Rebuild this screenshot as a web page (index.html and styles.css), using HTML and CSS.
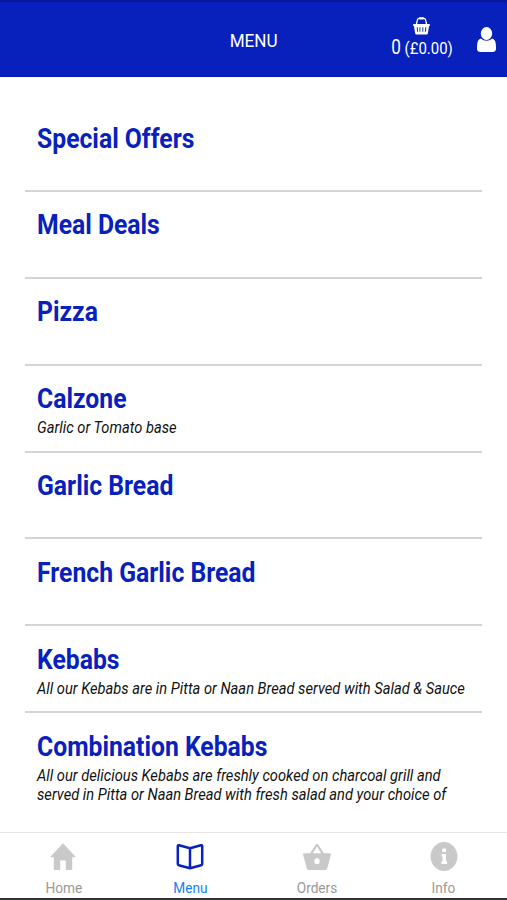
FILE: index.html
```html
<!DOCTYPE html>
<html lang="en">
<head>
    <meta charset="UTF-8">
    <title>Menu</title>
    <link rel="stylesheet" href="styles.css">
</head>
<body>
    <div class="app">
        <header class="header">
            <h1><span class="text">MENU</span></h1>
            <div class="basket">
                <svg class="basket-icon" viewBox="0 0 17 18" preserveAspectRatio="none">
                    <path d="M3.2 8 4.5 2.6Q4.8 1.3 6 1.3H11Q12.2 1.3 12.5 2.6L13.8 8" fill="none" stroke="#fff" stroke-width="1.3"/>
                    <rect x="6" y="0.3" width="5" height="2.2" rx="0.8" fill="#fff"/>
                    <path fill="#fff" fill-rule="evenodd" d="M1 7H16Q17 7 17 8T16 9.2L14.9 16.2Q14.7 17.6 13.5 17.6H3.5Q2.3 17.6 2.1 16.2L1 9.2Q0 9 0 8T1 7ZM3.7 10.2 4.2 14.8H5.1L4.7 10.2ZM6.5 10.2V14.8H7.4V10.2ZM9.4 10.2V14.8H10.3V10.2ZM12.3 10.2 11.9 14.8H12.8L13.3 10.2Z"/>
                </svg>
                <div class="total"><span class="text"><span class="count">0</span> (£0.00)</span></div>
            </div>
            <svg class="user-icon" viewBox="0 0 18 24" preserveAspectRatio="none">
                <path fill="#fff" d="M3.5 11Q0 12 0 18.8V20.6Q0 24 3.5 24H14.5Q18 24 18 20.6V18.8Q18 12 14.5 11Q12 13.2 9 13.2T3.5 11Z"/>
                <ellipse cx="9" cy="6.2" rx="5.4" ry="6.2" fill="#fff"/>
            </svg>
        </header>

        <main class="menu">
            <section class="item">
                <h2><span class="text">Special Offers</span></h2>
            </section>
            <section class="item">
                <h2><span class="text">Meal Deals</span></h2>
            </section>
            <section class="item">
                <h2><span class="text">Pizza</span></h2>
            </section>
            <section class="item">
                <h2><span class="text">Calzone</span></h2>
                <p><span class="text">Garlic or Tomato base</span></p>
            </section>
            <section class="item">
                <h2><span class="text">Garlic Bread</span></h2>
            </section>
            <section class="item">
                <h2><span class="text">French Garlic Bread</span></h2>
            </section>
            <section class="item">
                <h2><span class="text">Kebabs</span></h2>
                <p><span class="text">All our Kebabs are in Pitta or Naan Bread served with Salad &amp; Sauce</span></p>
            </section>
            <section class="item">
                <h2><span class="text">Combination Kebabs</span></h2>
                <p><span class="text">All our delicious Kebabs are freshly cooked on charcoal grill and<br>served in Pitta or Naan Bread with fresh salad and your choice of</span></p>
            </section>
        </main>

        <nav class="tabs">
            <a class="tab">
                <svg class="tab-icon" viewBox="0 0 28 32" preserveAspectRatio="none">
                    <path fill="#c9c9c9" d="M14 2.2 27 16.3H23.2V29H16.8V19.5H11.2V29H4.8V16.3H1Z"/>
                </svg>
                <span class="text">Home</span>
            </a>
            <a class="tab active">
                <svg class="tab-icon" viewBox="0 0 28 32" preserveAspectRatio="none">
                    <path fill="none" stroke="#0821bd" stroke-width="2.5" stroke-linejoin="round" d="M14 7.2 3.1 4.3Q1.8 4 1.8 5.2V23Q1.8 24 2.8 24.2L14 27.2 25.2 24.2Q26.2 24 26.2 23V5.2Q26.2 4 24.9 4.3L14 7.2V27"/>
                </svg>
                <span class="text">Menu</span>
            </a>
            <a class="tab">
                <svg class="tab-icon" viewBox="0 0 28 32" preserveAspectRatio="none">
                    <path fill="#c9c9c9" fill-rule="evenodd" d="M13 3.3Q14 2 15 3.3L21 12.2H26.8Q28.2 12.2 27.9 13.6L24.4 27Q23.9 29 22.2 29H5.8Q4.1 29 3.6 27L0.1 13.6Q-0.2 12.2 1.2 12.2H7ZM14 5.5 9.8 12.2H18.2ZM14 17.3A2.7 3 0 1 0 14 23.3A2.7 3 0 1 0 14 17.3Z"/>
                </svg>
                <span class="text">Orders</span>
            </a>
            <a class="tab">
                <svg class="tab-icon" viewBox="0 0 28 32" preserveAspectRatio="none">
                    <ellipse cx="14" cy="15.5" rx="13.4" ry="14.5" fill="#c9c9c9"/>
                    <rect x="12.3" y="7.4" width="3.8" height="3.6" rx="0.5" fill="#fff"/>
                    <path fill="#fff" d="M11.6 13H16V20.3H17V23H11.4V20.3H12.5V15.6H11.6Z"/>
                </svg>
                <span class="text">Info</span>
            </a>
        </nav>
    </div>
</body>
</html>
```
FILE: styles.css
```css
body {
    font-family: Roboto, sans-serif;
    background-color: #fff;
    margin: 0;
    padding: 0;
}
.app {
    display: flex;
    flex-direction: column;
    height: 900px;
    box-sizing: border-box;
    border-bottom: 2px solid #333;
    overflow: hidden;
}
/* condensed lettering */
.text {
    display: inline-block;
    white-space: nowrap;
    transform: scaleX(0.88);
}
.header {
    display: grid;
    grid-template-columns: 127px 253px 83px 44px;
    height: 77px;
    flex: none;
    box-sizing: border-box;
    border-top: 2px solid #06189a;
    background-color: #0821bd;
    color: #fff;
}
.header h1 {
    grid-column: 2;
    margin: 0;
    padding-top: 27px;
    font-size: 19px;
    font-weight: 400;
    line-height: 24px;
    text-align: center;
}
.header h1 .text {
    transform: scaleX(0.9);
}
.basket {
    display: flex;
    flex-direction: column;
    align-items: center;
    padding-top: 15px;
}
.basket-icon {
    width: 17px;
    height: 18px;
}
.total {
    font-size: 17px;
    line-height: 24px;
    padding-top: 1px;
}
.count {
    font-size: 19.5px;
}
.user-icon {
    width: 19px;
    height: 25px;
    margin: 25px 0 0 14px;
}
.menu {
    flex: 1;
    min-height: 0;
    padding: 28px 25px 0;
    overflow: hidden;
}
.item {
    height: 86.9px;
    box-sizing: border-box;
    padding: 16.5px 12px 0;
    border-bottom: 2px solid #d4d4d4;
}
.item .text {
    transform-origin: left;
}
.item h2 {
    margin: 0;
    color: #0821bd;
    font-size: 28px;
    font-weight: 700;
    line-height: 34px;
}
.item h2 .text {
    transform: scaleX(0.883);
}
.item p {
    margin: 2px 0 0;
    color: #111;
    font-size: 16.5px;
    font-style: italic;
    line-height: 19px;
}
.item p .text {
    transform: scaleX(0.89);
}
.item:last-child {
    border-bottom: none;
    height: auto;
}
.tabs {
    display: flex;
    height: 66px;
    flex: none;
    box-sizing: border-box;
    border-top: 1px solid #e6e6e6;
}
.tab {
    display: flex;
    flex: 1;
    flex-direction: column;
    align-items: center;
    padding-top: 8px;
    color: #999;
    font-size: 15.5px;
    line-height: 20px;
}
.tab-icon {
    width: 28px;
    height: 32px;
    margin-bottom: 5px;
}
.active {
    color: #1681f5;
}
```
